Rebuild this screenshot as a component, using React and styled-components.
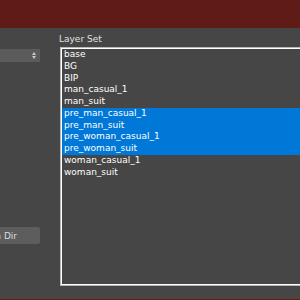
import styled, { createGlobalStyle } from "styled-components";

const GlobalStyle = createGlobalStyle`
  html, body {
    margin: 0;
    padding: 0;
    width: 300px;
    height: 300px;
    overflow: hidden;
    background: #464646;
  }
`;

const Window = styled.div`
  width: 300px;
  height: 300px;
  display: flex;
  flex-direction: column;
  overflow: hidden;
  font-family: "DejaVu Sans", "Liberation Sans", sans-serif;
  font-size: 9px;
  color: #e6e6e6;
`;

const TitleBar = styled.div`
  height: 28px;
  flex-shrink: 0;
  background: #5f1b16;
`;

const Body = styled.div`
  flex: 1;
  display: flex;
  background: #464646;
`;

const Footer = styled.div`
  height: 1px;
  flex-shrink: 0;
  background: #6a1c15;
`;

const LeftCol = styled.div`
  width: 100px;
  margin-left: -60px;
  flex-shrink: 0;
  display: flex;
  flex-direction: column;
  align-items: flex-end;
`;

const Combo = styled.div`
  margin-top: 21px;
  width: 92px;
  height: 13px;
  background: #5b5b5b;
  display: flex;
  justify-content: flex-end;
  align-items: center;
  padding-right: 4px;
  box-sizing: border-box;
`;

const Spin = styled.div`
  display: flex;
  flex-direction: column;
  gap: 1px;
`;

const Arrow = styled.div`
  width: 0;
  height: 0;
  border-left: 2.5px solid transparent;
  border-right: 2.5px solid transparent;
  ${(p) =>
    p.$up
      ? "border-bottom: 3px solid #c8c8c8;"
      : "border-top: 3px solid #c8c8c8;"}
`;

const Button = styled.div`
  margin-top: 165px;
  width: 86px;
  height: 17px;
  background: #5d5d5d;
  border-radius: 2px;
  display: flex;
  align-items: center;
  justify-content: center;
  color: #dcdcdc;
`;

const ListCol = styled.div`
  margin-left: 19px;
  width: 260px;
  flex-shrink: 0;
  display: flex;
  flex-direction: column;
`;

const Label = styled.div`
  margin-top: 4px;
  height: 14px;
  line-height: 14px;
  color: #e0e0e0;
`;

const ListBox = styled.div`
  margin-top: 1px;
  margin-left: 1px;
  height: 239px;
  box-sizing: border-box;
  border: 1px solid #b8b8b8;
  box-shadow: inset 0 0 0 1px #ffffff;
  padding: 1px;
  background: #464646;
`;

const Item = styled.div`
  height: 11.75px;
  line-height: 11.75px;
  padding-left: 2px;
  color: #ffffff;
  white-space: nowrap;
  background: ${(p) => (p.$selected ? "#0078d7" : "transparent")};
`;

const layers = [
  "base",
  "BG",
  "BIP",
  "man_casual_1",
  "man_suit",
  "pre_man_casual_1",
  "pre_man_suit",
  "pre_woman_casual_1",
  "pre_woman_suit",
  "woman_casual_1",
  "woman_suit",
];

const selected = ["pre_man_casual_1", "pre_man_suit", "pre_woman_casual_1", "pre_woman_suit"];

export default function App() {
  return (
    <Window>
      <GlobalStyle />
      <TitleBar />
      <Body>
        <LeftCol>
          <Combo>
            <Spin>
              <Arrow $up />
              <Arrow />
            </Spin>
          </Combo>
          <Button>Open Dir</Button>
        </LeftCol>
        <ListCol>
          <Label>Layer Set</Label>
          <ListBox>
            {layers.map((name) => (
              <Item key={name} $selected={selected.includes(name)}>
                {name}
              </Item>
            ))}
          </ListBox>
        </ListCol>
      </Body>
      <Footer />
    </Window>
  );
}
